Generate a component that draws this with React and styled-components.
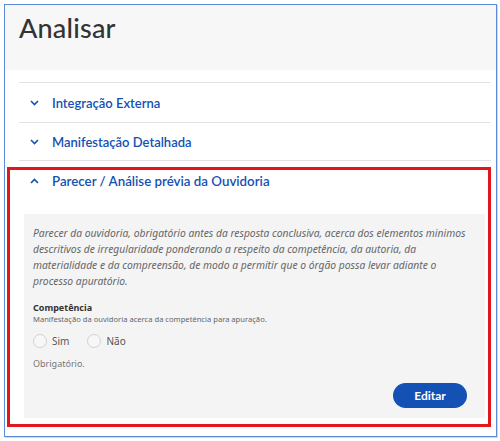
import React from 'react'
import styled, { createGlobalStyle } from 'styled-components'

const Global = createGlobalStyle`
  body {
    margin: 0;
    background: #ffffff;
    font-family: Lato, "Open Sans", sans-serif;
  }
`
const Frame = styled.div`
  margin: 4px;
  width: 491px;
  height: 431px;
  border: 1px solid #5b8bd9;
  box-shadow: 1px 1px 0 #c9d7f0;
  background: #fff;
`
const Header = styled.div`
  height: 65px;
  background: #f7f7f7;
  padding: 6px 0 0 14px;
  box-sizing: border-box;
`
const Title = styled.h1`
  margin: 0;
  font-size: 27px;
  font-weight: 500;
  color: #333;
  letter-spacing: 0.2px;
`
const Content = styled.div`
  padding: 12px 5px 0 14px;
`
const Row = styled.div`
  height: 39px;
  border-top: 1px solid #e3e3e3;
  display: flex;
  align-items: center;
  gap: 13px;
  padding-left: 11px;
  color: #1351b4;
  font-size: 13px;
  font-weight: 600;
`
const Last = styled(Row)`
  border-bottom: 1px solid #e3e3e3;
  height: 37px;
`
const Marked = styled.div`
  margin: 6px 0 0 -12px;
  height: 260px;
  border: 3px solid #e3161b;
  padding: 0 3px 6px 14px;
  box-sizing: border-box;
  display: flex;
  flex-direction: column;
`
const OpenHead = styled.div`
  height: 22px;
  display: flex;
  align-items: center;
  gap: 13px;
  padding-left: 6px;
  color: #1351b4;
  font-size: 13.3px;
  font-weight: 600;
`
const Panel = styled.div`
  flex: 1;
  margin-top: 22px;
  background: #f4f4f4;
  padding: 11px 10px 0 9px;
`
const Lead = styled.p`
  margin: 0;
  font-size: 10.3px;
  line-height: 16px;
  font-style: italic;
  color: #666;
  font-family: "Noto Sans", sans-serif;
  white-space: nowrap;
`
const Label = styled.div`
  margin-top: 12px;
  font-size: 9px;
  font-weight: 700;
  color: #333;
  font-family: "Noto Sans", sans-serif;
`
const Hint = styled.div`
  font-size: 7.6px;
  color: #666;
  font-family: "Noto Sans", sans-serif;
`
const Options = styled.div`
  display: flex;
  gap: 18px;
  margin-top: 10px;
`
const Option = styled.label`
  display: flex;
  align-items: center;
  gap: 5px;
  font-size: 10px;
  color: #555;
  font-family: "Noto Sans", sans-serif;
`
const Circle = styled.span`
  width: 14px;
  height: 14px;
  border-radius: 50%;
  border: 1px solid #d2d2d2;
  background: #f7f7f7;
  box-sizing: border-box;
`
const Required = styled.div`
  margin-top: 9px;
  font-size: 9px;
  color: #777;
  font-family: "Noto Sans", sans-serif;
`
const Footer = styled.div`
  display: flex;
  justify-content: flex-end;
  margin-top: 13px;
`
const Button = styled.button`
  width: 74px;
  height: 25px;
  border: none;
  border-radius: 13px;
  background: #1351b4;
  color: #fff;
  font-family: Lato, sans-serif;
  font-weight: 700;
  font-size: 12px;
  margin-right: 8px;
`

function Chevron({ up }) {
  return (
    <svg width="9" height="6" viewBox="0 0 9 6">
      <polyline
        points={up ? '1,5 4.5,1.5 8,5' : '1,1 4.5,4.5 8,1'}
        fill="none"
        stroke="#1351b4"
        strokeWidth="1.6"
      />
    </svg>
  )
}

export default function App() {
  return (
    <>
      <Global />
      <Frame>
        <Header>
          <Title>Analisar</Title>
        </Header>
        <Content>
          <Row><Chevron />Integração Externa</Row>
          <Last><Chevron />Manifestação Detalhada</Last>
          <Marked>
            <OpenHead><Chevron up />Parecer / Análise prévia da Ouvidoria</OpenHead>
            <Panel>
              <Lead>
                Parecer da ouvidoria, obrigatório antes da resposta conclusiva, acerca dos elementos minimos<br />
                descritivos de irregularidade ponderando a respeito da competência, da autoria, da<br />
                materialidade e da compreensão, de modo a permitir que o órgão possa levar adiante o<br />
                processo apuratório.
              </Lead>
              <Label>Competência</Label>
              <Hint>Manifestação da ouvidoria acerca da competência para apuração.</Hint>
              <Options>
                <Option><Circle />Sim</Option>
                <Option><Circle />Não</Option>
              </Options>
              <Required>Obrigatório.</Required>
              <Footer>
                <Button>Editar</Button>
              </Footer>
            </Panel>
          </Marked>
        </Content>
      </Frame>
    </>
  )
}
